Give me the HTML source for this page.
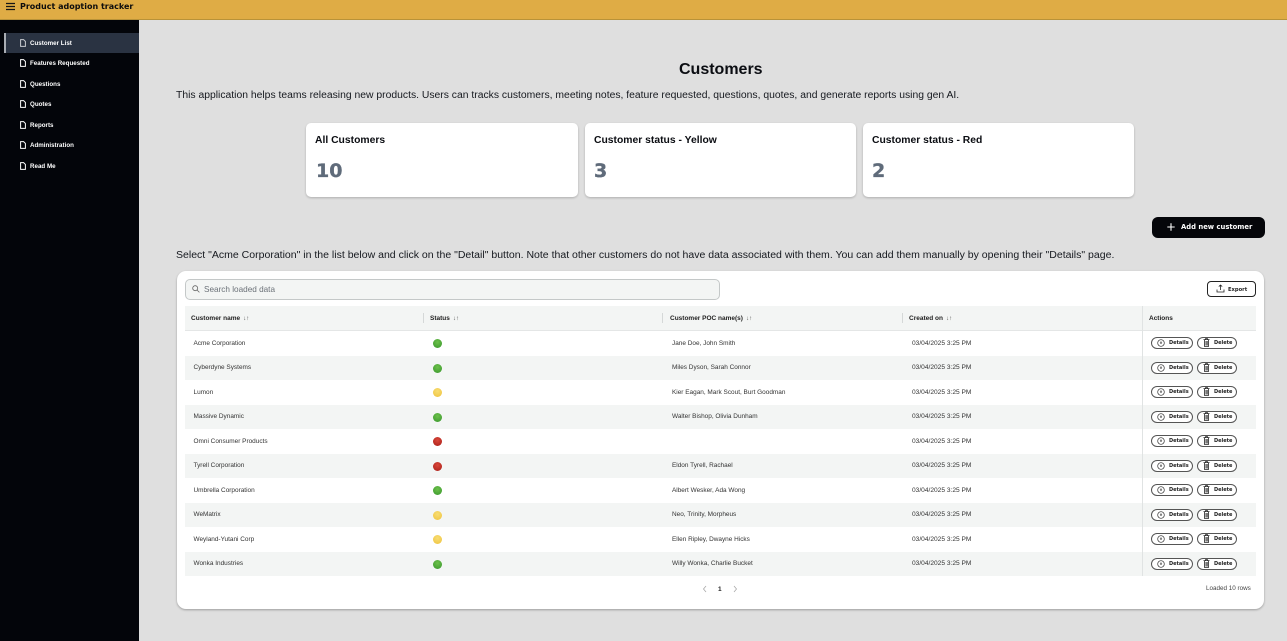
<!DOCTYPE html>
<html><head><meta charset="utf-8"><style>
*{box-sizing:border-box}
html,body{margin:0;padding:0}
body{width:1287px;height:641px;overflow:hidden;background:#dfdfdf;position:relative;font-family:"Liberation Sans",sans-serif;color:#0b0d12}
.a{position:absolute;white-space:nowrap}
.nav{left:30px;font:bold 6.2px/10px "Liberation Sans",sans-serif;color:#fff;letter-spacing:.02px}
.ni{position:absolute;left:20px;width:6px;height:8px}
.p{left:176px;font:10.36px/15px "Liberation Sans",sans-serif;color:#16191f}
.card{position:absolute;top:123px;height:74px;background:#fff;border-radius:5px;box-shadow:0 1px 2px rgba(0,0,0,.22)}
.card b{position:absolute;left:9px;top:10.5px;font:bold 10.35px/13px "Liberation Sans",sans-serif;color:#0b0d12;white-space:nowrap}
.card i{position:absolute;left:10px;top:35px;font:bold normal 19px/26px "DejaVu Sans",sans-serif;color:#5f6b7a;-webkit-text-stroke:.35px #5f6b7a}
.row{position:absolute;left:185px;width:1071px;height:24.5px}
.row.s{background:#f3f5f4}
.t{position:absolute;top:7.5px;font-size:6.45px;line-height:10px;color:#333;white-space:nowrap}
.c{left:8.5px}.n{left:487px}.o{left:727px;font-size:6.6px}
.d{position:absolute;left:248px;top:8px;width:9px;height:9px;border-radius:50%}
.g{background:radial-gradient(circle at 50% 35%,#6cc04a,#37962c)}
.y{background:radial-gradient(circle at 50% 35%,#f8dd72,#eec23e)}
.r{background:radial-gradient(circle at 50% 35%,#d9473a,#a81e18)}
.b1,.b2{position:absolute;top:6px;height:12px;border:1px solid #555;border-radius:6px;background:#fff;font:bold 5px/10.5px "DejaVu Sans",sans-serif;color:#222;white-space:nowrap}
.b1{left:966px;width:42px;padding-left:17px}
.b2{left:1012px;width:40px;padding-left:16px}
.b1 svg{position:absolute;left:4.5px;top:1px}
.b2 svg{position:absolute;left:4.5px;top:.4px}
.h{position:absolute;top:313.5px;font:bold 6.5px/10px "Liberation Sans",sans-serif;color:#222;white-space:nowrap}
.sep{position:absolute;top:313px;width:1px;height:10px;background:#d5d8d8}
.sort{font-weight:normal;font-size:6px;color:#555;margin-left:3px}
</style></head><body>

<div class="a" style="left:0;top:0;width:1287px;height:20px;background:#dfac45;border-bottom:1px solid #b89238"></div>
<svg class="a" style="left:5px;top:1.5px" width="11" height="9" viewBox="0 0 11 9"><path d="M1 1.5H10M1 4.5H10M1 7.5H10" stroke="#161616" stroke-width="1.2"/></svg>
<div class="a" style="left:20px;top:.5px;font:bold 8px/11px 'DejaVu Sans',sans-serif;color:#0d0d0d">Product adoption tracker</div>

<div class="a" style="left:0;top:20px;width:139px;height:621px;background:#03050a"></div>
<div class="a" style="left:4px;top:33px;width:135px;height:20px;background:#2a3342;border-left:2px solid #a9adb3"></div>
<div class="a nav" style="top:38.5px">Customer List</div>
<div class="a nav" style="top:58.5px">Features Requested</div>
<div class="a nav" style="top:79.5px">Questions</div>
<div class="a nav" style="top:99.5px">Quotes</div>
<div class="a nav" style="top:120.5px">Reports</div>
<div class="a nav" style="top:140.5px">Administration</div>
<div class="a nav" style="top:161.5px">Read Me</div>
<svg class="ni" style="top:39px" viewBox="0 0 6 8"><path d="M.6.6H3.6L5.4 2.4V7.4H.6Z" fill="none" stroke="#c9ccd1" stroke-width="1"/></svg>
<svg class="ni" style="top:59px" viewBox="0 0 6 8"><path d="M.6.6H3.6L5.4 2.4V7.4H.6Z" fill="none" stroke="#fff" stroke-width="1"/></svg>
<svg class="ni" style="top:80px" viewBox="0 0 6 8"><path d="M.6.6H3.6L5.4 2.4V7.4H.6Z" fill="none" stroke="#fff" stroke-width="1"/></svg>
<svg class="ni" style="top:100px" viewBox="0 0 6 8"><path d="M.6.6H3.6L5.4 2.4V7.4H.6Z" fill="none" stroke="#fff" stroke-width="1"/></svg>
<svg class="ni" style="top:121px" viewBox="0 0 6 8"><path d="M.6.6H3.6L5.4 2.4V7.4H.6Z" fill="none" stroke="#fff" stroke-width="1"/></svg>
<svg class="ni" style="top:141px" viewBox="0 0 6 8"><path d="M.6.6H3.6L5.4 2.4V7.4H.6Z" fill="none" stroke="#fff" stroke-width="1"/></svg>
<svg class="ni" style="top:162px" viewBox="0 0 6 8"><path d="M.6.6H3.6L5.4 2.4V7.4H.6Z" fill="none" stroke="#fff" stroke-width="1"/></svg>

<div class="a" style="left:679px;top:59.5px;font:bold 16px/19px 'Liberation Sans',sans-serif;color:#0b0d12">Customers</div>
<div class="a p" style="top:87.5px">This application helps teams releasing new products. Users can tracks customers, meeting notes, feature requested, questions, quotes, and generate reports using gen AI.</div>

<div class="card" style="left:306px;width:272px"><b>All Customers</b><i>10</i></div>
<div class="card" style="left:585px;width:271px"><b>Customer status - Yellow</b><i style="left:9px">3</i></div>
<div class="card" style="left:863px;width:271px"><b>Customer status - Red</b><i style="left:9px">2</i></div>

<div class="a" style="left:1152px;top:217px;width:113px;height:21px;background:#05060a;border-radius:6px"></div>
<svg class="a" style="left:1167px;top:223px" width="8" height="8" viewBox="0 0 8 8"><path d="M4 .3V7.7M.3 4H7.7" stroke="#fff" stroke-width="1.1"/></svg>
<div class="a" style="left:1181px;top:222px;font:bold 6.8px/11px 'DejaVu Sans',sans-serif;color:#fff">Add new customer</div>

<div class="a p" style="top:247.5px;font-size:10.53px">Select "Acme Corporation" in the list below and click on the "Detail" button. Note that other customers do not have data associated with them. You can add them manually by opening their "Details" page.</div>

<div class="a" style="left:177px;top:271px;width:1087px;height:338px;background:#fff;border-radius:9px;box-shadow:0 1px 2px rgba(0,0,0,.3)"></div>
<div class="a" style="left:185px;top:279px;width:535px;height:21px;background:#f3f5f4;border:1px solid #c4c8c8;border-radius:5px"></div>
<svg class="a" style="left:192px;top:285px" width="8" height="8" viewBox="0 0 8 8"><circle cx="3.2" cy="3.2" r="2.5" fill="none" stroke="#666" stroke-width=".8"/><path d="M5 5L7.4 7.4" stroke="#666" stroke-width=".8"/></svg>
<div class="a" style="left:204px;top:284px;font-size:8.2px;line-height:11px;color:#6b7178">Search loaded data</div>

<div class="a" style="left:1207px;top:281px;width:49px;height:16px;border:1px solid #222;border-radius:4px;background:#fff"></div>
<svg class="a" style="left:1216px;top:284px" width="9" height="9" viewBox="0 0 9 9"><path d="M4.5 6V1M2.8 2.6L4.5 1 6.2 2.6M1 5.5V8H8V5.5" fill="none" stroke="#222" stroke-width=".8"/></svg>
<div class="a" style="left:1228px;top:284.5px;font:bold 5.2px/10px 'DejaVu Sans',sans-serif;color:#222">Export</div>

<div class="a" style="left:185px;top:306px;width:1071px;height:25px;background:#f3f5f4;border-bottom:1px solid #e4e6e6"></div>
<div class="h" style="left:191px">Customer name<span class="sort">↓↑</span></div>
<div class="sep" style="left:423px"></div>
<div class="h" style="left:430px">Status<span class="sort">↓↑</span></div>
<div class="sep" style="left:662px"></div>
<div class="h" style="left:670px">Customer POC name(s)<span class="sort">↓↑</span></div>
<div class="sep" style="left:902px"></div>
<div class="h" style="left:909px">Created on<span class="sort">↓↑</span></div>
<div class="h" style="left:1149px">Actions</div>

<div class="row" style="top:331px"><div class="t c">Acme Corporation</div><div class="d g"></div><div class="t n">Jane Doe, John Smith</div><div class="t o">03/04/2025 3:25 PM</div><div class="b1"><svg width="8" height="8" viewBox="0 0 8 8"><circle cx="4" cy="4" r="3.3" fill="none" stroke="#333" stroke-width=".7"/><path d="M4 2.2V4.4M3 3.6L4 4.6 5 3.6" fill="none" stroke="#333" stroke-width=".6"/></svg>Details</div><div class="b2"><svg width="7" height="9" viewBox="0 0 7 9"><path d="M.5 1.6H6.5M2.5 1.5V.6H4.5V1.5M1.4 2V8.4H5.6V2M3 3V7.5M4.2 3V7.5" fill="none" stroke="#222" stroke-width=".8"/></svg>Delete</div></div>
<div class="row s" style="top:355.5px"><div class="t c">Cyberdyne Systems</div><div class="d g"></div><div class="t n">Miles Dyson, Sarah Connor</div><div class="t o">03/04/2025 3:25 PM</div><div class="b1"><svg width="8" height="8" viewBox="0 0 8 8"><circle cx="4" cy="4" r="3.3" fill="none" stroke="#333" stroke-width=".7"/><path d="M4 2.2V4.4M3 3.6L4 4.6 5 3.6" fill="none" stroke="#333" stroke-width=".6"/></svg>Details</div><div class="b2"><svg width="7" height="9" viewBox="0 0 7 9"><path d="M.5 1.6H6.5M2.5 1.5V.6H4.5V1.5M1.4 2V8.4H5.6V2M3 3V7.5M4.2 3V7.5" fill="none" stroke="#222" stroke-width=".8"/></svg>Delete</div></div>
<div class="row" style="top:380px"><div class="t c">Lumon</div><div class="d y"></div><div class="t n">Kier Eagan, Mark Scout, Burt Goodman</div><div class="t o">03/04/2025 3:25 PM</div><div class="b1"><svg width="8" height="8" viewBox="0 0 8 8"><circle cx="4" cy="4" r="3.3" fill="none" stroke="#333" stroke-width=".7"/><path d="M4 2.2V4.4M3 3.6L4 4.6 5 3.6" fill="none" stroke="#333" stroke-width=".6"/></svg>Details</div><div class="b2"><svg width="7" height="9" viewBox="0 0 7 9"><path d="M.5 1.6H6.5M2.5 1.5V.6H4.5V1.5M1.4 2V8.4H5.6V2M3 3V7.5M4.2 3V7.5" fill="none" stroke="#222" stroke-width=".8"/></svg>Delete</div></div>
<div class="row s" style="top:404.5px"><div class="t c">Massive Dynamic</div><div class="d g"></div><div class="t n">Walter Bishop, Olivia Dunham</div><div class="t o">03/04/2025 3:25 PM</div><div class="b1"><svg width="8" height="8" viewBox="0 0 8 8"><circle cx="4" cy="4" r="3.3" fill="none" stroke="#333" stroke-width=".7"/><path d="M4 2.2V4.4M3 3.6L4 4.6 5 3.6" fill="none" stroke="#333" stroke-width=".6"/></svg>Details</div><div class="b2"><svg width="7" height="9" viewBox="0 0 7 9"><path d="M.5 1.6H6.5M2.5 1.5V.6H4.5V1.5M1.4 2V8.4H5.6V2M3 3V7.5M4.2 3V7.5" fill="none" stroke="#222" stroke-width=".8"/></svg>Delete</div></div>
<div class="row" style="top:429px"><div class="t c">Omni Consumer Products</div><div class="d r"></div><div class="t o">03/04/2025 3:25 PM</div><div class="b1"><svg width="8" height="8" viewBox="0 0 8 8"><circle cx="4" cy="4" r="3.3" fill="none" stroke="#333" stroke-width=".7"/><path d="M4 2.2V4.4M3 3.6L4 4.6 5 3.6" fill="none" stroke="#333" stroke-width=".6"/></svg>Details</div><div class="b2"><svg width="7" height="9" viewBox="0 0 7 9"><path d="M.5 1.6H6.5M2.5 1.5V.6H4.5V1.5M1.4 2V8.4H5.6V2M3 3V7.5M4.2 3V7.5" fill="none" stroke="#222" stroke-width=".8"/></svg>Delete</div></div>
<div class="row s" style="top:453.5px"><div class="t c">Tyrell Corporation</div><div class="d r"></div><div class="t n">Eldon Tyrell, Rachael</div><div class="t o">03/04/2025 3:25 PM</div><div class="b1"><svg width="8" height="8" viewBox="0 0 8 8"><circle cx="4" cy="4" r="3.3" fill="none" stroke="#333" stroke-width=".7"/><path d="M4 2.2V4.4M3 3.6L4 4.6 5 3.6" fill="none" stroke="#333" stroke-width=".6"/></svg>Details</div><div class="b2"><svg width="7" height="9" viewBox="0 0 7 9"><path d="M.5 1.6H6.5M2.5 1.5V.6H4.5V1.5M1.4 2V8.4H5.6V2M3 3V7.5M4.2 3V7.5" fill="none" stroke="#222" stroke-width=".8"/></svg>Delete</div></div>
<div class="row" style="top:478px"><div class="t c">Umbrella Corporation</div><div class="d g"></div><div class="t n">Albert Wesker, Ada Wong</div><div class="t o">03/04/2025 3:25 PM</div><div class="b1"><svg width="8" height="8" viewBox="0 0 8 8"><circle cx="4" cy="4" r="3.3" fill="none" stroke="#333" stroke-width=".7"/><path d="M4 2.2V4.4M3 3.6L4 4.6 5 3.6" fill="none" stroke="#333" stroke-width=".6"/></svg>Details</div><div class="b2"><svg width="7" height="9" viewBox="0 0 7 9"><path d="M.5 1.6H6.5M2.5 1.5V.6H4.5V1.5M1.4 2V8.4H5.6V2M3 3V7.5M4.2 3V7.5" fill="none" stroke="#222" stroke-width=".8"/></svg>Delete</div></div>
<div class="row s" style="top:502.5px"><div class="t c">WeMatrix</div><div class="d y"></div><div class="t n">Neo, Trinity, Morpheus</div><div class="t o">03/04/2025 3:25 PM</div><div class="b1"><svg width="8" height="8" viewBox="0 0 8 8"><circle cx="4" cy="4" r="3.3" fill="none" stroke="#333" stroke-width=".7"/><path d="M4 2.2V4.4M3 3.6L4 4.6 5 3.6" fill="none" stroke="#333" stroke-width=".6"/></svg>Details</div><div class="b2"><svg width="7" height="9" viewBox="0 0 7 9"><path d="M.5 1.6H6.5M2.5 1.5V.6H4.5V1.5M1.4 2V8.4H5.6V2M3 3V7.5M4.2 3V7.5" fill="none" stroke="#222" stroke-width=".8"/></svg>Delete</div></div>
<div class="row" style="top:527px"><div class="t c">Weyland-Yutani Corp</div><div class="d y"></div><div class="t n">Ellen Ripley, Dwayne Hicks</div><div class="t o">03/04/2025 3:25 PM</div><div class="b1"><svg width="8" height="8" viewBox="0 0 8 8"><circle cx="4" cy="4" r="3.3" fill="none" stroke="#333" stroke-width=".7"/><path d="M4 2.2V4.4M3 3.6L4 4.6 5 3.6" fill="none" stroke="#333" stroke-width=".6"/></svg>Details</div><div class="b2"><svg width="7" height="9" viewBox="0 0 7 9"><path d="M.5 1.6H6.5M2.5 1.5V.6H4.5V1.5M1.4 2V8.4H5.6V2M3 3V7.5M4.2 3V7.5" fill="none" stroke="#222" stroke-width=".8"/></svg>Delete</div></div>
<div class="row s" style="top:551.5px"><div class="t c">Wonka Industries</div><div class="d g"></div><div class="t n">Willy Wonka, Charlie Bucket</div><div class="t o">03/04/2025 3:25 PM</div><div class="b1"><svg width="8" height="8" viewBox="0 0 8 8"><circle cx="4" cy="4" r="3.3" fill="none" stroke="#333" stroke-width=".7"/><path d="M4 2.2V4.4M3 3.6L4 4.6 5 3.6" fill="none" stroke="#333" stroke-width=".6"/></svg>Details</div><div class="b2"><svg width="7" height="9" viewBox="0 0 7 9"><path d="M.5 1.6H6.5M2.5 1.5V.6H4.5V1.5M1.4 2V8.4H5.6V2M3 3V7.5M4.2 3V7.5" fill="none" stroke="#222" stroke-width=".8"/></svg>Delete</div></div>

<div class="a" style="left:1142px;top:306px;width:1px;height:270px;background:#e0e3e3"></div>

<svg class="a" style="left:702px;top:585px" width="6" height="8" viewBox="0 0 6 8"><path d="M4 1L1.5 4 4 7" fill="none" stroke="#aaa" stroke-width=".8"/></svg>
<div class="a" style="left:718px;top:583.5px;font:bold 6.5px/11px 'Liberation Sans',sans-serif;color:#222">1</div>
<svg class="a" style="left:732px;top:585px" width="6" height="8" viewBox="0 0 6 8"><path d="M2 1L4.5 4 2 7" fill="none" stroke="#aaa" stroke-width=".8"/></svg>
<div class="a" style="left:1206px;top:584px;font-size:6.3px;line-height:10px;color:#444">Loaded 10 rows</div>

</body></html>
